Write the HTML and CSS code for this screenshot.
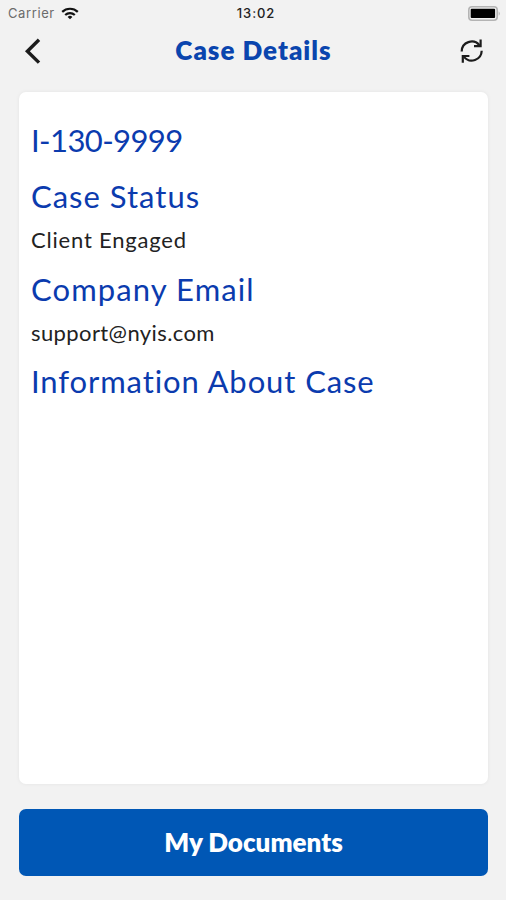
FILE: index.html
```html
<!DOCTYPE html>
<html lang="en">
<head>
  <meta charset="UTF-8">
  <meta name="viewport" content="width=device-width, initial-scale=1">
  <title>Case Details</title>
  <link rel="stylesheet" href="styles.css">
</head>
<body>
  <div class="status-bar">
    <div class="status-left">
      <span class="carrier">Carrier</span>
      <svg class="wifi" width="18" height="13" viewBox="0 0 18 13" fill="none" stroke="#111" stroke-width="2.2">
        <path d="M1.2 4.9a11.2 11.2 0 0 1 15.6 0" />
        <path d="M4.2 8a7 7 0 0 1 9.6 0" />
        <path d="M9 12.2L6.6 10a3.5 3.5 0 0 1 4.8 0z" fill="#111" stroke="none" />
      </svg>
    </div>
    <span class="time">13:02</span>
    <div class="status-right">
      <svg width="34" height="15" viewBox="0 0 34 15">
        <rect x="0.8" y="0.8" width="28.4" height="13.4" rx="3.2" fill="#f2f2f2" stroke="#b4b4b4" stroke-width="1.6" />
        <rect x="2.7" y="2.8" width="24.4" height="9.2" rx="1" fill="#000" />
        <path d="M30.7 5.2q2.2 2.3 0 4.6z" fill="#b4b4b4" />
      </svg>
    </div>
  </div>

  <div class="navbar">
    <button class="icon-btn" aria-label="Back">
      <svg width="20" height="28" viewBox="0 0 20 28" fill="none" stroke="#1c1c1c" stroke-width="3.4">
        <path d="M18 2.8L6.4 14.2L18 25.6" />
      </svg>
    </button>
    <h1>Case Details</h1>
    <button class="icon-btn" aria-label="Refresh">
      <svg width="24" height="26" viewBox="0 0 24 26" fill="none" stroke="#1c1c1c" stroke-width="2.2">
        <path d="M1.7 13.4A10 10 0 0 1 19.4 7.2" />
        <path d="M20.6 1.4V8.2H14" />
        <path d="M21.7 12.8A10 10 0 0 1 4 18.9" />
        <path d="M2.8 24.8V18H9.4" />
      </svg>
    </button>
  </div>

  <div class="card">
    <h2 class="case-number">I-130-9999</h2>
    <h2 class="status-title">Case Status</h2>
    <p class="status-text">Client Engaged</p>
    <h2 class="email-title">Company Email</h2>
    <p class="email-text">support@nyis.com</p>
    <h2 class="info-title">Information About Case</h2>
  </div>

  <button class="documents-btn">My Documents</button>
</body>
</html>
```

FILE: styles.css
```css
* {
  box-sizing: border-box;
}

body {
  margin: 0;
  height: 900px;
  display: flex;
  flex-direction: column;
  background-color: #f2f2f2;
  font-family: Lato, 'Liberation Sans', sans-serif;
}

button {
  border: none;
  padding: 0;
  font-family: inherit;
  cursor: pointer;
}

.status-bar {
  height: 26px;
  padding: 0 4px 0 8px;
  display: grid;
  grid-template-columns: 1fr auto 1fr;
  align-items: center;
  font-family: Inter, 'Liberation Sans', sans-serif;
  font-size: 13px;
}

.status-left {
  display: flex;
  align-items: center;
  gap: 6px;
}

.carrier {
  color: #6b6b6b;
  letter-spacing: 0.6px;
}

.time {
  padding-left: 2px;
  color: #222;
  font-weight: 500;
  letter-spacing: 0.9px;
}

.status-right {
  display: flex;
  justify-content: flex-end;
}

.navbar {
  height: 50px;
  padding: 0 22px 0 21px;
  display: flex;
  align-items: center;
  justify-content: space-between;
}

.navbar h1 {
  margin: 0;
  padding: 0 0 2px 2px;
  font-size: 26px;
  line-height: 32px;
  font-weight: 800;
  letter-spacing: 1px;
  color: #0a45ae;
}

.icon-btn {
  width: 24px;
  height: 28px;
  display: flex;
  align-items: center;
  background: none;
}

.card {
  height: 692px;
  margin: 16px 18px 0 19px;
  padding: 28px 12px;
  background-color: #fff;
  border-radius: 7px;
  box-shadow: 0 0 4px rgba(0, 0, 0, 0.06);
}

.card h2 {
  margin: 0 0 12px;
  font-size: 31px;
  line-height: 40px;
  font-weight: 400;
  letter-spacing: 1px;
  color: #0b3bae;
  white-space: nowrap;
}

.card .case-number {
  margin-bottom: 16px;
  letter-spacing: -0.6px;
}

.card .email-title {
  letter-spacing: 1.1px;
}

.card .info-title {
  letter-spacing: 0.9px;
}

.card p {
  margin: 0 0 16px;
  font-size: 22px;
  line-height: 24.5px;
  letter-spacing: 0.8px;
  color: #222;
}

.card .email-text {
  letter-spacing: 0.4px;
}

.documents-btn {
  height: 67px;
  margin: 25px 18px 0 19px;
  padding-bottom: 2px;
  background-color: #0057b5;
  border-radius: 7px;
  color: #fff;
  font-size: 26px;
  font-weight: 800;
}
```
